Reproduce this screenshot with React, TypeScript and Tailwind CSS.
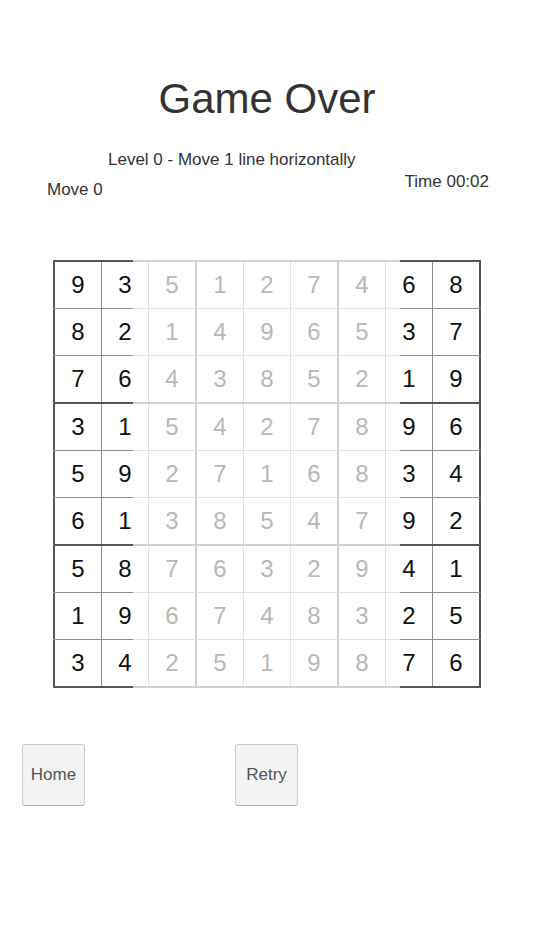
import React from 'react'

const grid = [
  [9, 3, 5, 1, 2, 7, 4, 6, 8],
  [8, 2, 1, 4, 9, 6, 5, 3, 7],
  [7, 6, 4, 3, 8, 5, 2, 1, 9],
  [3, 1, 5, 4, 2, 7, 8, 9, 6],
  [5, 9, 2, 7, 1, 6, 8, 3, 4],
  [6, 1, 3, 8, 5, 4, 7, 9, 2],
  [5, 8, 7, 6, 3, 2, 9, 4, 1],
  [1, 9, 6, 7, 4, 8, 3, 2, 5],
  [3, 4, 2, 5, 1, 9, 8, 7, 6],
]

// left border of each column
const colBorder = [
  'border-l-2 border-[#555555]',
  'border-l border-[#8e8e8e]',
  'border-l border-[#e2e2e2]',
  'border-l-2 border-[#d0d0d0]',
  'border-l border-[#e2e2e2]',
  'border-l border-[#e2e2e2]',
  'border-l-2 border-[#d0d0d0]',
  'border-l border-[#e2e2e2]',
  'border-l border-[#8e8e8e] border-r-2 border-r-[#555555]',
]

// columns still in play
const active = [true, true, false, false, false, false, false, true, true]

function Divider({ thick }: { thick: boolean }) {
  return (
    <div className={`flex items-start ${thick ? 'h-[2px]' : 'h-px'}`}>
      <div className={`w-[80px] ${thick ? 'h-[2px] bg-[#555555]' : 'h-px bg-[#8e8e8e]'}`} />
      <div className={`flex-1 ${thick ? 'h-[2px] bg-[#d2d2d2]' : 'h-px bg-[#e2e2e2]'}`} />
      <div className={`w-[81px] ${thick ? 'h-[2px] bg-[#555555]' : 'h-px bg-[#8e8e8e]'}`} />
    </div>
  )
}

function Board() {
  return (
    <div className="ml-[53px] w-[428px]">
      {grid.map((row, r) => (
        <div key={r}>
          <Divider thick={r % 3 === 0} />
          <div className="flex h-[46px]">
            {row.map((n, c) => (
              <div
                key={c}
                className={`flex-1 flex items-center justify-center text-[24px] ${colBorder[c]} ${
                  active[c] ? 'text-[#111111]' : 'text-[#b8b8b8]'
                }`}
              >
                {n}
              </div>
            ))}
          </div>
        </div>
      ))}
      <Divider thick />
    </div>
  )
}

export default function App() {
  return (
    <div
      className="w-[534px] h-[950px] bg-white text-[#333333]"
      style={{ fontFamily: '"Liberation Sans", Arial, sans-serif' }}
    >
      <h1 className="pt-[75px] text-center text-[42px] leading-[48px]">Game Over</h1>

      <div className="mt-[27px] pl-[108px] text-[17px] leading-[20px]">
        Level 0 - Move 1 line horizontally
      </div>

      <div className="flex justify-between items-start">
        <div className="pl-[47px] mt-[10px] text-[17px] leading-[20px]">Move 0</div>
        <div className="pr-[45px] mt-[2px] text-[17px] leading-[20px]">Time 00:02</div>
      </div>

      <div className="mt-[60px]">
        <Board />
      </div>

      <div className="flex gap-[150px] pl-[22px] mt-[56px]">
        <button className="w-[63px] h-[62px] rounded-[3px] border border-[#cccccc] border-b-[#a9a9a9] bg-[#f4f4f4] text-[17px] text-[#555555]">
          Home
        </button>
        <button className="w-[63px] h-[62px] rounded-[3px] border border-[#cccccc] border-b-[#a9a9a9] bg-[#f4f4f4] text-[17px] text-[#555555]">
          Retry
        </button>
      </div>
    </div>
  )
}
